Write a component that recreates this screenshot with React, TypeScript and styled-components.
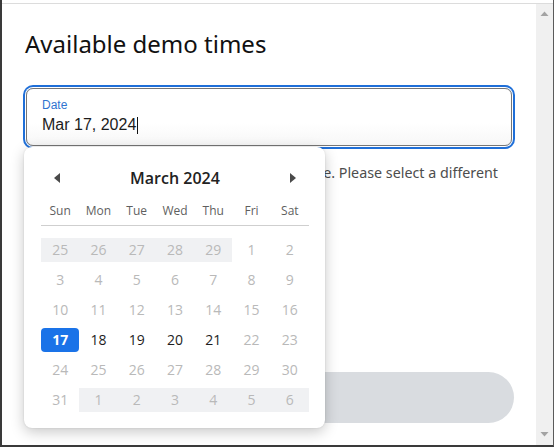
import styled, { createGlobalStyle } from 'styled-components';

const GlobalStyle = createGlobalStyle`
  html, body {
    margin: 0;
    padding: 0;
    background: #ffffff;
  }
  * {
    box-sizing: border-box;
  }
`;

const Window = styled.div`
  width: 554px;
  height: 447px;
  display: flex;
  flex-direction: column;
  border-left: 2px solid #3a3a3a;
  border-right: 1px solid #5a5a5a;
  border-bottom: 2px solid #3a3a3a;
  overflow: hidden;
`;

const TopEdge = styled.div`
  height: 4px;
  border-bottom: 1px solid #dcdcdc;
  flex-shrink: 0;
`;

const Body = styled.div`
  flex: 1;
  display: flex;
  min-height: 0;
`;

const Content = styled.div`
  flex: 1;
  padding: 25px 22px 0 22px;
  display: flex;
  flex-direction: column;
`;

const Title = styled.h1`
  margin: 0 0 27px 1px;
  font-family: 'Noto Sans', sans-serif;
  font-weight: 400;
  font-size: 24px;
  line-height: 30px;
  color: #111;
`;

const InputWrap = styled.div`
  position: relative;
  padding: 2px;
`;

const Field = styled.div`
  height: 58px;
  border: 1px solid #767676;
  border-radius: 7px;
  box-shadow: 0 0 0 1px #ffffff, 0 0 0 3px #1f6fd8;
  padding: 9px 15px 0;
  font-family: 'Liberation Sans', Arial, sans-serif;
  background: linear-gradient(#ffffff 60%, #f7f7f7);
`;

const Label = styled.div`
  font-size: 12px;
  line-height: 14px;
  color: #2f74d0;
`;

const Value = styled.div`
  font-size: 16px;
  line-height: 22px;
  margin-top: 2px;
  color: #1c1c1c;
  display: flex;
  align-items: center;
`;

const Caret = styled.span`
  display: inline-block;
  width: 1px;
  height: 17px;
  background: #111;
  margin-left: 1px;
`;

const Message = styled.p`
  margin: 14px 0 0 2px;
  padding-right: 6px;
  font-family: 'Noto Sans', sans-serif;
  font-size: 14.3px;
  line-height: 22px;
  color: #4d4d4d;
`;

const Submit = styled.button`
  margin-top: auto;
  margin-bottom: 22px;
  height: 51px;
  border: none;
  border-radius: 26px;
  background: #d9dce0;
`;

const Popup = styled.div`
  position: absolute;
  left: 0;
  top: 61px;
  width: 301px;
  height: 281px;
  background: #ffffff;
  border-radius: 8px;
  box-shadow: 0 4px 14px rgba(0, 0, 0, 0.22), 0 0 2px rgba(0, 0, 0, 0.12);
  padding: 12px 16px 16px 17px;
  font-family: 'Open Sans', 'Noto Sans', sans-serif;
  z-index: 2;
`;

const Header = styled.div`
  height: 38px;
  display: flex;
  align-items: center;
  justify-content: space-between;
  padding: 0 12px;
`;

const MonthName = styled.div`
  font-size: 16px;
  line-height: 20px;
  font-weight: 600;
  color: #222;
`;

const Arrow = styled.svg`
  width: 8px;
  height: 12px;
  display: block;
`;

const WeekRow = styled.div`
  display: grid;
  grid-template-columns: repeat(7, 1fr);
  height: 29px;
  align-items: center;
  border-bottom: 1px solid #cfcfcf;
`;

const WeekDay = styled.div`
  text-align: center;
  font-size: 12px;
  line-height: 16px;
  color: #5f5f5f;
`;

const Days = styled.div`
  display: grid;
  grid-template-columns: repeat(7, 1fr);
  grid-auto-rows: 24px;
  row-gap: 6px;
  margin-top: 12px;
`;

type Kind = 'outside' | 'disabled' | 'enabled' | 'selected';

const Day = styled.div<{ $kind: Kind }>`
  display: flex;
  align-items: center;
  justify-content: center;
  font-size: 14px;
  line-height: 18px;
  border-radius: ${(p) => (p.$kind === 'selected' ? '4px' : '0')};
  background: ${(p) =>
    p.$kind === 'selected' ? '#1a73e8' : p.$kind === 'outside' ? '#f0f1f3' : 'transparent'};
  color: ${(p) =>
    p.$kind === 'selected' ? '#ffffff' : p.$kind === 'enabled' ? '#1e1e1e' : '#b9b9b9'};
  font-weight: ${(p) => (p.$kind === 'selected' ? 700 : 400)};
`;

const Scrollbar = styled.div`
  width: 17px;
  background: #f0f0f0;
  display: flex;
  flex-direction: column;
  justify-content: space-between;
  align-items: center;
  padding: 7px 0 8px;
`;

const ScrollArrow = styled.svg`
  width: 9px;
  height: 5px;
  display: block;
`;

const weekDays = ['Sun', 'Mon', 'Tue', 'Wed', 'Thu', 'Fri', 'Sat'];

const buildDays = () => {
  const list: { n: number; kind: Kind }[] = [];
  [25, 26, 27, 28, 29].forEach((n) => list.push({ n, kind: 'outside' }));
  for (let n = 1; n <= 31; n++) {
    let kind: Kind = 'disabled';
    if (n === 17) kind = 'selected';
    else if (n >= 18 && n <= 21) kind = 'enabled';
    list.push({ n, kind });
  }
  [1, 2, 3, 4, 5, 6].forEach((n) => list.push({ n, kind: 'outside' }));
  return list;
};

const App = () => {
  const days = buildDays();

  return (
    <>
      <GlobalStyle />
      <Window>
        <TopEdge />
        <Body>
          <Content>
            <Title>Available demo times</Title>
            <InputWrap>
              <Field>
                <Label>Date</Label>
                <Value>
                  Mar 17, 2024
                  <Caret />
                </Value>
              </Field>
              <Popup>
                <Header>
                  <Arrow viewBox="0 0 8 12">
                    <path d="M7 1 L1 6 L7 11 Z" fill="#4a4a4a" />
                  </Arrow>
                  <MonthName>March 2024</MonthName>
                  <Arrow viewBox="0 0 8 12">
                    <path d="M1 1 L7 6 L1 11 Z" fill="#4a4a4a" />
                  </Arrow>
                </Header>
                <WeekRow>
                  {weekDays.map((d) => (
                    <WeekDay key={d}>{d}</WeekDay>
                  ))}
                </WeekRow>
                <Days>
                  {days.map((d, i) => (
                    <Day key={i} $kind={d.kind}>
                      {d.n}
                    </Day>
                  ))}
                </Days>
              </Popup>
            </InputWrap>
            <Message>
              Sorry, no demo time is available for your date. Please select a different date.
            </Message>
            <Submit />
          </Content>
          <Scrollbar>
            <ScrollArrow viewBox="0 0 9 5">
              <path d="M0.5 5 L4.5 0.5 L8.5 5 Z" fill="#a3a3a3" />
            </ScrollArrow>
            <ScrollArrow viewBox="0 0 9 5">
              <path d="M0.5 0 L4.5 4.5 L8.5 0 Z" fill="#a3a3a3" />
            </ScrollArrow>
          </Scrollbar>
        </Body>
      </Window>
    </>
  );
};

export default App;
